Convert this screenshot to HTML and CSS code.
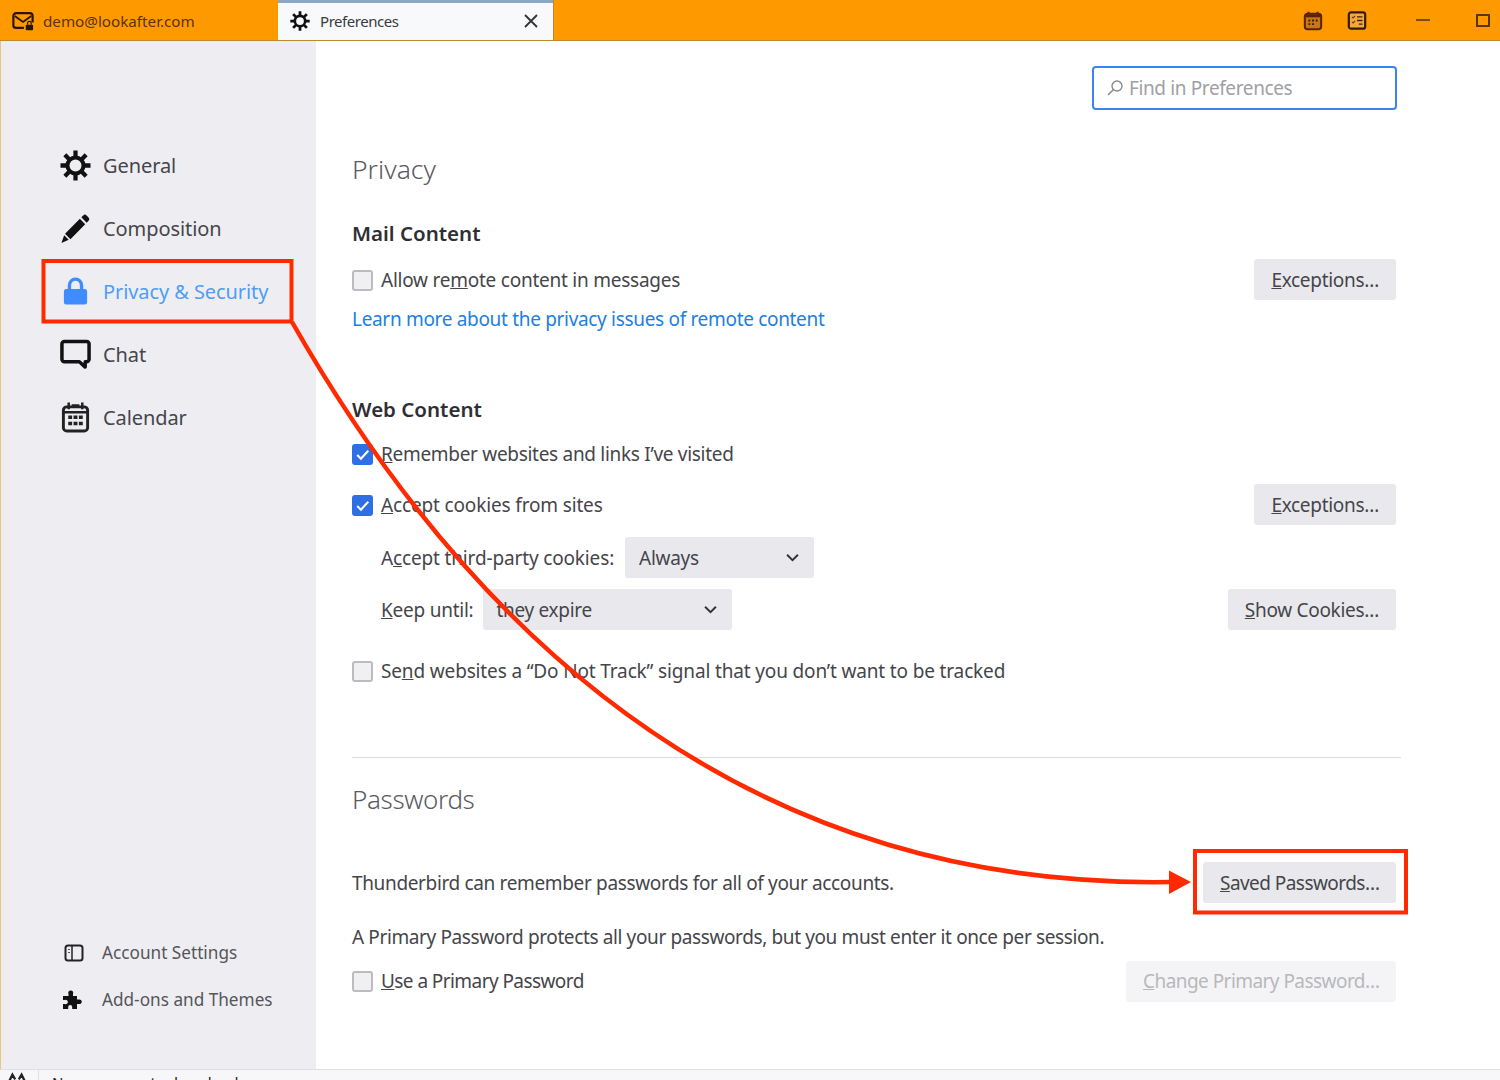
FILE: index.html
```html
<!DOCTYPE html>
<html lang="en">
<head>
<meta charset="utf-8">
<title>Preferences</title>
<link rel="stylesheet" href="styles.css">
</head>
<body>
<div class="app">
  <header class="titlebar">
    <div class="tab tab-mail">
      <svg class="tab-icon" viewBox="0 0 24 24"><path d="M13 19.500H4.500a3 3 0 0 1-3-3v-10a3 3 0 0 1 3-3h15a3 3 0 0 1 3 3v7" fill="none" stroke="#2a1500" stroke-width="2.400"/><path d="M3 6.500l9 6.500 9-6.500" fill="none" stroke="#2a1500" stroke-width="2"/><rect x="15" y="16" width="8" height="6" rx="1" fill="#2a1500"/><path d="M17 16v-1.500a2 2 0 0 1 4 0V16" fill="none" stroke="#2a1500" stroke-width="1.300"/></svg>
      <span>demo@lookafter.com</span>
    </div>
    <div class="tab tab-active">
      <svg class="tab-icon gear-small" viewBox="0 0 32 32"><use href="#gear"/></svg>
      <span class="tab-label">Preferences</span>
      <svg class="tab-close" viewBox="0 0 14 14"><path d="M1 1l12 12M13 1L1 13" stroke="#333" stroke-width="1.800" fill="none"/></svg>
    </div>
    <div class="title-tools">
      <svg class="tool" viewBox="0 0 22 22"><rect x="2" y="3.500" width="18" height="17" rx="3" fill="#c9780f" stroke="#5a2208" stroke-width="2.200"/><path d="M6 1.500v3M16 1.500v3" stroke="#5a2208" stroke-width="2"/><path d="M3 4.500h16v3H3z" fill="#5a2208"/><path d="M6 11h2M10 11h2M14 11h2M6 15h2M10 15h2" stroke="#3a1804" stroke-width="2"/></svg>
      <svg class="tool tool-tasks" viewBox="0 0 22 22"><rect x="2" y="2" width="18" height="18" rx="2.500" fill="#f2a93c" stroke="#3a1804" stroke-width="2.400"/><path d="M5.500 7l1.200 1.200L9 6M5.500 12.500l1.200 1.200L9 11.500" stroke="#6b3a0c" stroke-width="1.200" fill="none"/><path d="M11 7h6M11 11h6M13 15h4" stroke="#4a1f05" stroke-width="1.600"/></svg>
      <span class="win-min"></span>
      <span class="win-max"></span>
    </div>
  </header>

  <div class="body">
    <nav class="sidebar">
      <ul class="nav-main">
        <li class="nav-item">
          <svg class="nav-icon" viewBox="0 0 32 32"><defs><g id="gear"><circle cx="16" cy="16" r="8.300" fill="none" stroke="#111" stroke-width="4.200"/><path d="M16 .5v7M16 24.500v7M.5 16h7M24.500 16h7M5 5l5 5M22 22l5 5M27 5l-5 5M10 22l-5 5" stroke="#111" stroke-width="4.400" fill="none"/></g></defs><use href="#gear"/></svg>
          <span>General</span>
        </li>
        <li class="nav-item">
          <svg class="nav-icon" viewBox="0 0 32 32"><path fill="#111" d="M24 2.500a2.400 2.400 0 0 1 3.400 0l2.100 2.100a2.400 2.400 0 0 1 0 3.400l-2 2-5.500-5.500zM20.500 6l5.500 5.500L10.800 27l-5.600-5.600z"/><path fill="#111" d="M4.300 23L9 27.700 1.500 31z"/></svg>
          <span>Composition</span>
        </li>
        <li class="nav-item nav-active">
          <svg class="nav-icon" viewBox="0 0 32 32"><path fill="#3f8cff" d="M4 16a2.500 2.500 0 0 1 2.500-2.500H8V9.500a8 8 0 0 1 16 0v4h1.500A2.500 2.500 0 0 1 28 16v11a2.500 2.500 0 0 1-2.500 2.500h-19A2.500 2.500 0 0 1 4 27zm7.500-2.500h9v-4a4.500 4.500 0 0 0-9 0z" fill-rule="evenodd"/></svg>
          <span>Privacy &amp; Security</span>
        </li>
        <li class="nav-item">
          <svg class="nav-icon" viewBox="0 0 32 32"><path fill="none" stroke="#111" stroke-width="3.600" stroke-linejoin="round" d="M4.500 2.500h23A2.500 2.500 0 0 1 30 5v16a2.500 2.500 0 0 1-2.500 2.500H26v5.500l-6-5.500H4.500A2.500 2.500 0 0 1 2 21V5a2.500 2.500 0 0 1 2.500-2.500z"/></svg>
          <span>Chat</span>
        </li>
        <li class="nav-item">
          <svg class="nav-icon" viewBox="0 0 32 32"><rect x="3.500" y="5" width="25" height="25" rx="3.500" fill="none" stroke="#222" stroke-width="3"/><path d="M9 .5v7M23 .5v7M12 3.500h8M4 10.500h24" stroke="#222" stroke-width="2.600"/><path d="M8.500 14h4v3.500h-4zM14 14h4v3.500h-4zM19.500 14h4v3.500h-4zM8.500 20.500h4V24h-4zM14 20.500h4V24h-4zM19.500 20.500h4V24h-4z" fill="#222"/></svg>
          <span>Calendar</span>
        </li>
      </ul>
      <ul class="nav-bottom">
        <li class="nav-sub">
          <svg class="sub-icon sub-account" viewBox="0 0 20 20"><rect x="1.500" y="2.500" width="17" height="15" rx="2.500" fill="none" stroke="#222" stroke-width="2"/><path d="M8 3v14" stroke="#222" stroke-width="1.500"/><path d="M4 6.500h2M4 9.500h2" stroke="#555" stroke-width="1.200"/></svg>
          <span>Account Settings</span>
        </li>
        <li class="nav-sub">
          <svg class="sub-icon" viewBox="0 0 22 22"><path fill="#111" d="M2 7h5.500V5a2.500 2.500 0 1 1 4.500 0v2h4v3.500h2a2.300 2.300 0 1 1 0 4.500h-2V20h-4.800v-2a2 2 0 1 0-4 0v2H2v-5h1.800a2.200 2.200 0 1 0 0-4H2z"/></svg>
          <span>Add-ons and Themes</span>
        </li>
      </ul>
    </nav>

    <main class="content">
      <div class="search-row">
        <div class="search">
          <svg class="search-icon" viewBox="0 0 18 18"><circle cx="11" cy="7" r="5" fill="none" stroke="#8a8a8a" stroke-width="1.400"/><path d="M7.500 10.500L2 16" stroke="#8a8a8a" stroke-width="1.600"/></svg>
          <span>Find in Preferences</span>
        </div>
      </div>

      <h1 class="h-privacy">Privacy</h1>
      <h2 class="h-mail">Mail Content</h2>
      <div class="row row-mail">
        <span class="check"></span>
        <span class="label label-allow">Allow re<u>m</u>ote content in messages</span>
        <button class="btn"><u>E</u>xceptions…</button>
      </div>
      <a class="link">Learn more about the privacy issues of remote content</a>

      <h2 class="h-web">Web Content</h2>
      <div class="row row-remember">
        <span class="check checked"><svg viewBox="0 0 20 20"><path d="M5 10.500l3.500 3.500L15.500 6.500" fill="none" stroke="#fff" stroke-width="2"/></svg></span>
        <span class="label"><u>R</u>emember websites and links I’ve visited</span>
      </div>
      <div class="row row-accept">
        <span class="check checked"><svg viewBox="0 0 20 20"><path d="M5 10.500l3.500 3.500L15.500 6.500" fill="none" stroke="#fff" stroke-width="2"/></svg></span>
        <span class="label label-loose"><u>A</u>ccept cookies from sites</span>
        <button class="btn"><u>E</u>xceptions…</button>
      </div>
      <div class="row row-indent row-third">
        <span class="label label-loose">A<u>c</u>cept third-party cookies:</span>
        <div class="select select-always"><span>Always</span><svg class="chev" viewBox="0 0 12 8"><path d="M1 1.500l5 5 5-5" fill="none" stroke="#333" stroke-width="1.800"/></svg></div>
      </div>
      <div class="row row-indent row-keep">
        <span class="label label-allow"><u>K</u>eep until:</span>
        <div class="select select-keep"><span>they expire</span><svg class="chev" viewBox="0 0 12 8"><path d="M1 1.500l5 5 5-5" fill="none" stroke="#333" stroke-width="1.800"/></svg></div>
        <button class="btn"><u>S</u>how Cookies…</button>
      </div>
      <div class="row row-dnt">
        <span class="check"></span>
        <span class="label label-loose">Se<u>n</u>d websites a “Do Not Track” signal that you don’t want to be tracked</span>
      </div>

      <hr class="divider">

      <h1 class="h-passwords">Passwords</h1>
      <div class="row row-saved">
        <span class="label label-thunder">Thunderbird can remember passwords for all of your accounts.</span>
        <button class="btn btn-saved"><u>S</u>aved Passwords…</button>
      </div>
      <p class="para">A Primary Password protects all your passwords, but you must enter it once per session.</p>
      <div class="row row-primary">
        <span class="check"></span>
        <span class="label label-use"><u>U</u>se a Primary Password</span>
        <button class="btn btn-disabled"><u>C</u>hange Primary Password…</button>
      </div>
    </main>
  </div>

  <footer class="statusbar">
    <svg class="status-icon" viewBox="0 0 24 12"><path d="M3 11l4-8 3 5M21 11l-4-8-3 5" fill="none" stroke="#222" stroke-width="2.500"/></svg>
    <span class="status-text">No messages to download</span>
  </footer>

  <svg class="annotations" viewBox="0 0 1500 1080" aria-hidden="true">
    <rect x="43.500" y="261" width="248" height="60.500" fill="none" stroke="#ff2a00" stroke-width="4"/>
    <rect x="1195" y="851" width="211" height="61.500" fill="none" stroke="#ff2a00" stroke-width="4"/>
    <path d="M292 322C445 590 708 890 1172 882" fill="none" stroke="#ff2a00" stroke-width="4.500"/>
    <path d="M1191 882L1169 870.500V894z" fill="#ff2a00"/>
  </svg>
</div>
</body>
</html>
```
FILE: styles.css
```css
* { box-sizing: border-box; }
html, body { margin: 0; padding: 0; }
body {
  width: 1500px;
  height: 1080px;
  overflow: hidden;
  background: #fff;
  font-family: "Noto Sans", "Open Sans", sans-serif;
  color: #45454a;
}
.app {
  position: relative;
  width: 1500px;
  height: 1080px;
  display: flex;
  flex-direction: column;
}
.titlebar {
  flex: 0 0 41px;
  display: flex;
  background: #fe9a00;
  border-bottom: 1px solid #c08a2c;
}
.tab {
  display: flex;
  align-items: center;
  height: 40px;
}
.tab-mail {
  width: 278px;
  padding: 2px 0 0 12px;
  font-size: 15.200px;
  color: #5b3300;
  gap: 9px;
}
.tab-active {
  width: 275px;
  padding: 0 15px 2px 12px;
  background: #f7f9fb;
  border-top: 3px solid #8aa9c4;
  color: #3a3a3f;
  font-size: 15px;
  letter-spacing: -0.450px;
  gap: 10px;
  box-shadow: 1px 0 0 #c08a2c;
}
.tab-icon { width: 22px; height: 22px; flex: none; }
.tab-label { flex: 1; }
.gear-small { width: 20px; height: 20px; overflow: visible; }
.tab-close { width: 14px; height: 14px; flex: none; }
.title-tools {
  margin-left: auto;
  display: flex;
  align-items: center;
}
.tool { width: 20px; height: 21px; flex: none; }
.tool-tasks { margin-left: 24px; }
.win-min {
  width: 14px;
  height: 2px;
  margin-left: 49px;
  background: #7a4a10;
}
.win-max {
  width: 14px;
  height: 13px;
  margin: 0 10px 0 46px;
  border: 2px solid #5b3408;
}
.body {
  flex: 1;
  display: flex;
  min-height: 0;
}
.sidebar {
  flex: 0 0 316px;
  display: flex;
  flex-direction: column;
  justify-content: space-between;
  background: #eeeef2;
  border-left: 1px solid #e8c67c;
  padding: 93px 0 46px 59px;
}
.nav-main, .nav-bottom { list-style: none; margin: 0; padding: 0; }
.nav-item {
  display: flex;
  align-items: center;
  gap: 12px;
  height: 63px;
  font-size: 20px;
  letter-spacing: -0.080px;
}
.nav-icon { width: 31px; height: 31px; flex: none; overflow: visible; }
.nav-active { color: #4f9df5; }
.nav-sub {
  display: flex;
  align-items: center;
  height: 47px;
  font-size: 17.200px;
  color: #55555a;
}
.sub-icon { width: 22px; height: 22px; flex: none; margin: 0 19px 0 1px; }
.sub-account { width: 20px; margin: 0 18px 0 4px; }
.content {
  flex: 1;
  padding: 0 104px 0 36px;
  min-width: 0;
  font-size: 19px;
  letter-spacing: -0.300px;
}
.search-row {
  display: flex;
  justify-content: flex-end;
  margin: 25px -1px 0 0;
}
.search {
  width: 305px;
  height: 44px;
  display: flex;
  align-items: center;
  gap: 5px;
  padding-left: 12px;
  border: 2.500px solid #3c82f0;
  border-radius: 4px;
  letter-spacing: -0.380px;
  color: #a0a0a4;
}
.search-icon { width: 18px; height: 18px; flex: none; }
h1, h2, p { margin: 0; font-weight: 400; }
.h-privacy, .h-passwords {
  line-height: 38px;
  font-weight: 300;
  letter-spacing: 0;
  color: #5a5a5f;
}
.h-privacy { margin-top: 40px; font-size: 26.500px; }
.h-mail, .h-web {
  font-size: 20.500px;
  line-height: 28px;
  font-weight: 600;
  letter-spacing: 0;
  color: #2f2f33;
}
.h-mail { margin-top: 31px; }
.h-web { margin-top: 63px; }
.row {
  display: flex;
  align-items: center;
  height: 42px;
}
.row-mail { margin-top: 11px; }
.link {
  display: block;
  margin-top: 6px;
  line-height: 26px;
  letter-spacing: -0.320px;
  color: #1b80e0;
}
.row-remember { margin-top: 9px; }
.row-accept { margin-top: 9px; }
.row-third { margin-top: 11px; }
.row-keep { margin-top: 10px; }
.row-dnt { margin-top: 19px; }
.row-indent { padding-left: 29px; }
.label { padding-top: 2px; }
.label-allow { letter-spacing: -0.240px; }
.label-loose { letter-spacing: -0.150px; }
.label-thunder { letter-spacing: -0.350px; }
.label-use { letter-spacing: -0.570px; padding-top: 0; }
.check {
  width: 21px;
  height: 21px;
  flex: none;
  margin: 2px 8px 0 0;
  background: #f0f0f2;
  border: 2px solid #bcbcc0;
  border-radius: 3px;
}
.row-primary .check { margin-top: 0; }
.check.checked {
  background: #2f6fe6;
  border: 0;
}
.check svg { display: block; width: 21px; height: 21px; }
.btn {
  margin-left: auto;
  height: 41px;
  padding: 2px 17px 0;
  border: 0;
  border-radius: 3px;
  background: #e9e9ed;
  color: #45454a;
  font: inherit;
  letter-spacing: inherit;
  white-space: nowrap;
}
.btn-saved { width: 193px; text-align: right; letter-spacing: -0.550px; }
.btn-disabled {
  width: 270px;
  padding-top: 0;
  text-align: right;
  letter-spacing: -0.550px;
  background: #f4f4f6;
  color: #b8b8bb;
}
.select {
  display: flex;
  align-items: center;
  justify-content: space-between;
  height: 41px;
  margin-left: 10px;
  padding: 0 15px 0 13px;
  background: #e9e9ed;
  border-radius: 3px;
}
.select span { padding-top: 2px; }
.select-always { width: 189px; margin-left: 11px; padding-left: 14px; }
.select-keep { width: 249px; }
.chev { width: 13px; height: 9px; flex: none; }
.divider {
  height: 1px;
  margin: 66px -5px 0 0;
  border: 0;
  background: #dcdcdf;
}
.h-passwords { margin-top: 22px; font-size: 26px; letter-spacing: -0.350px; }
.row-saved { margin-top: 43px; }
.para { margin-top: 21px; line-height: 26px; letter-spacing: -0.380px; }
.row-primary { margin-top: 10px; }
.statusbar {
  flex: 0 0 11px;
  display: flex;
  align-items: flex-start;
  background: #f7f7f9;
  border-top: 1px solid #dfdfe2;
  overflow: hidden;
}
.status-icon { width: 26px; height: 11px; margin: 2px 8px 0 4px; flex: none; }
.status-text {
  padding-left: 13px;
  border-left: 1px solid #dfdfe2;
  font-size: 15px;
  line-height: 24px;
  color: #222;
}
.annotations {
  position: absolute;
  inset: 0;
  width: 1500px;
  height: 1080px;
  pointer-events: none;
}
```
